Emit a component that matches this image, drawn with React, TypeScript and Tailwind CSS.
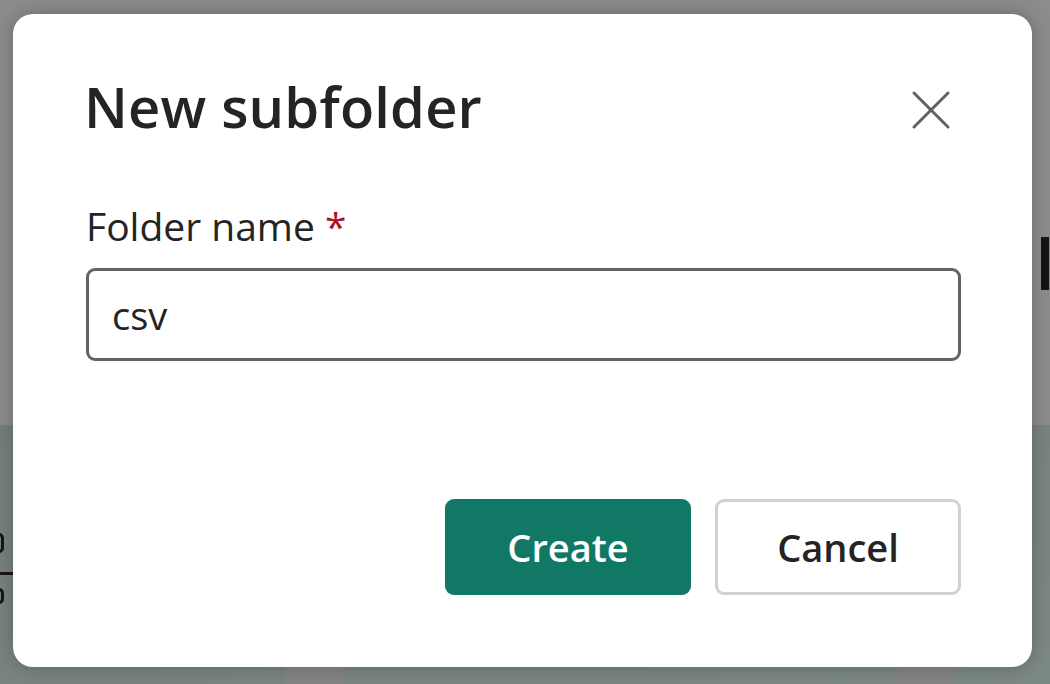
import { X } from "lucide-react"

export default function App() {
  return (
    <div className="relative h-[684px] w-[1050px] overflow-hidden font-['Open_Sans',sans-serif] text-[#242424]">
      {/* page behind the overlay */}
      <div className="flex h-full flex-col">
        <div className="flex h-[425px] justify-end bg-[#8c8c8c] pt-[237px]">
          <div className="mr-[1px] h-[53px] w-[8px] bg-[#141414]"></div>
        </div>
        <div className="flex flex-1 flex-col bg-gradient-to-br from-[#76807a] to-[#7d8983]">
          <div className="flex flex-col pt-[108px]">
            <div className="ml-[-6px] h-[20px] w-[10px] rounded-full border-[3px] border-[#161616]"></div>
            <div className="mt-[19px] h-[3px] w-[14px] bg-[#161616]"></div>
            <div className="ml-[-6px] mt-[13px] h-[16px] w-[10px] rounded-full border-[3px] border-[#161616]"></div>
          </div>
          <div className="mt-auto flex h-[24px]">
            <div className="ml-[285px] w-[58px] bg-[#858585]"></div>
            <div className="ml-[554px] w-[58px] bg-[#858585]"></div>
          </div>
        </div>
      </div>

      {/* dialog */}
      <div className="absolute left-[13px] top-[14px] flex h-[653px] w-[1019px] flex-col rounded-[20px] bg-white pl-[73px] pr-[71px] pt-[54px] pb-[72px] shadow-[0_0_20px_rgba(0,0,0,0.25)]">
        <div className="flex items-center justify-between">
          <h1 className="-ml-[2px] text-[56px] font-semibold leading-[76px] tracking-[0.2px]">New subfolder</h1>
          <button className="-mr-[4px] mt-[8px] flex h-[68px] w-[68px] items-center justify-center text-[#616161]">
            <X size={68} strokeWidth={1.05} />
          </button>
        </div>

        <label className="mt-[56px] text-[39px] leading-[52px]">
          Folder name <span className="text-[#b10e1c]">*</span>
        </label>
        <div className="mt-[16px] flex h-[93px] items-center rounded-[9px] border-[3px] border-[#636363] pl-[23px]">
          <span className="text-[38px] leading-[52px]">csv</span>
        </div>

        <div className="mt-auto flex justify-end gap-[24px]">
          <button className="h-[96px] w-[246px] rounded-[9px] bg-[#117865] text-[38px] font-semibold text-white">
            Create
          </button>
          <button className="h-[96px] w-[246px] rounded-[9px] border-[3px] border-[#d1d1d1] bg-white text-[38px] font-semibold text-[#242424]">
            Cancel
          </button>
        </div>
      </div>
    </div>
  )
}
